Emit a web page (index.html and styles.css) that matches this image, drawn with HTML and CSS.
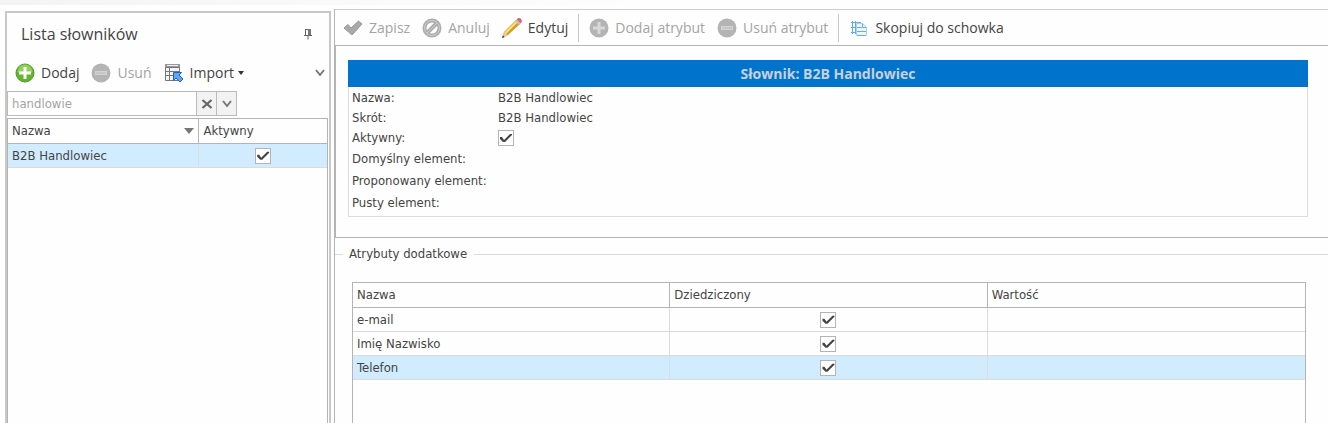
FILE: index.html
```html
<!DOCTYPE html>
<html lang="pl">
    <head>
        <title>Lista słowników</title>
        <meta charset="utf-8" />
        <meta name="viewport" content="width=device-width, initial-scale=1">
        <link rel="stylesheet" href="styles.css">
    </head>
    <body>
        <div class="strip"></div>
        <div class="app">
            <aside class="sidebar">
                <div class="sidebar-head">
                    <h1>Lista słowników</h1>
                    <button class="btn" type="button" aria-label="Przypnij">
                        <svg width="10" height="12" viewBox="0 0 10 12"><path d="M2.5 1v6M2 1.500h6M1 7.500h8M5 8v3.500" fill="none" stroke="#666"/><path d="M5 1h3v6H5z" fill="#777"/></svg>
                    </button>
                </div>
                <div class="tools">
                    <button class="btn" type="button">
                        <svg width="20" height="20" viewBox="0 0 20 20"><circle cx="10" cy="10" r="9" fill="#62b42c" stroke="#4f9a2a"/><path d="M2.500 9a7.500 7.500 0 0 1 15 0q-7 3-15 0z" fill="#8fd057"/><path d="M8.500 4h3v4.500H16v3h-4.500V16h-3v-4.500H4v-3h4.500z" fill="#fff"/></svg>
                        Dodaj
                    </button>
                    <button class="btn" type="button" disabled>
                        <svg width="20" height="20" viewBox="0 0 20 20"><circle cx="10" cy="10" r="9.500" fill="#b4b4b4"/><path d="M4 8h12v4H4z" fill="#d4d4d4"/><path d="M5 9.500h10v1H5z" fill="#bbb"/></svg>
                        Usuń
                    </button>
                    <button class="btn import" type="button">
                        <svg width="20" height="20" viewBox="0 0 20 20"><path d="M1.500 1.500h14v3h-14zM1.500 4.500h14v13h-14zM1.500 8.500h14M1.500 12.500h9M5.500 4.500v13" fill="#f3f3f3" stroke="#777"/><path d="M1 1h15v3H1z" fill="#999"/><path d="M3 2h11v1H3z" fill="#eee"/><path d="M9.500 9.500h8l-2.500 2.500 4 4-3 3-4-4-2.500 2.500z" fill="#62a5f5" stroke="#1d62c4"/></svg>
                        Import
                        <svg class="caret" width="6" height="4" viewBox="0 0 6 4"><path d="M0 0h6L3 4z" fill="#333"/></svg>
                    </button>
                    <button class="btn more" type="button" aria-label="Więcej">
                        <svg width="10" height="8" viewBox="0 0 10 8"><path d="M1 1l4 5 4-5" fill="none" stroke="#777" stroke-width="2"/></svg>
                    </button>
                </div>
                <div class="search">
                    <input type="text" value="handlowie" aria-label="Szukaj">
                    <button type="button" aria-label="Wyczyść">
                        <svg width="12" height="10" viewBox="0 0 12 10"><path d="M1.500 1l9 8M10.500 1l-9 8" stroke="#666" stroke-width="2.200"/></svg>
                    </button>
                    <button type="button" aria-label="Rozwiń">
                        <svg width="10" height="8" viewBox="0 0 10 8"><path d="M1 1l4 5 4-5" fill="none" stroke="#777" stroke-width="2"/></svg>
                    </button>
                </div>
                <div class="grid">
                    <table class="list">
                        <thead>
                            <tr>
                                <th class="name"><span class="sort">Nazwa <svg width="10" height="6" viewBox="0 0 10 6"><path d="M0 0h10L5 6z" fill="#777"/></svg></span></th>
                                <th>Aktywny</th>
                            </tr>
                        </thead>
                        <tbody>
                            <tr class="selected"><td>B2B Handlowiec</td><td class="center"><input class="check" type="checkbox" aria-label="Aktywny" checked></td></tr>
                        </tbody>
                    </table>
                </div>
            </aside>
            <main class="main">
                <div class="toolbar">
                    <button class="btn" type="button" disabled>
                        <svg width="20" height="20" viewBox="0 0 20 20"><path d="M1 10l4-3.500 3 3.500 7.500-7L19 6 9 17z" fill="#a9a9a9" stroke="#999"/></svg>
                        Zapisz
                    </button>
                    <button class="btn" type="button" disabled>
                        <svg width="20" height="20" viewBox="0 0 20 20"><circle cx="10" cy="10" r="7.500" fill="none" stroke="#adadad" stroke-width="4"/><path d="M5 15L15 5" stroke="#adadad" stroke-width="4"/><circle cx="10" cy="10" r="7.500" fill="none" stroke="#ccc"/><path d="M5 15L15 5" stroke="#ccc"/></svg>
                        Anuluj
                    </button>
                    <button class="btn" type="button">
                        <svg width="20" height="20" viewBox="0 0 20 20"><path d="M0 20l2-6L14 2l4 4L6 17z" fill="#d49a2a"/><path d="M2.500 14.500L14 3l1.500 1.500L4 16z" fill="#ffe37a"/><path d="M2 14l4 3.500L0 20z" fill="#e8c9a0"/><path d="M1 17.500L2.500 19 0 20z" fill="#222"/><path d="M13 3l1.500-1.500 4 4L17 7z" fill="#b9c0c4"/><path d="M14.500 1.500Q17-1 19 1t-.5 4.500z" fill="#dc6570"/></svg>
                        Edytuj
                    </button>
                    <span class="sep"></span>
                    <button class="btn" type="button" disabled>
                        <svg width="20" height="20" viewBox="0 0 20 20"><circle cx="10" cy="10" r="9.500" fill="#b4b4b4"/><path d="M8.500 4h3v4.500H16v3h-4.500V16h-3v-4.500H4v-3h4.500z" fill="#d8d8d8"/></svg>
                        Dodaj atrybut
                    </button>
                    <button class="btn" type="button" disabled>
                        <svg width="20" height="20" viewBox="0 0 20 20"><circle cx="10" cy="10" r="9.500" fill="#b4b4b4"/><path d="M4 8h12v4H4z" fill="#d4d4d4"/><path d="M5 9.500h10v1H5z" fill="#bbb"/></svg>
                        Usuń atrybut
                    </button>
                    <span class="sep"></span>
                    <button class="btn" type="button">
                        <svg width="20" height="20" viewBox="0 0 20 20"><path d="M2 4.500h10M2 9.500h5M2 14.500h5M3.500 3v13M6.500 3v13" fill="none" stroke="#62aef5"/><path d="M7.500 5.500h6l4 4v8h-10z" fill="#eff7ff" stroke="#a5d0fa"/><path d="M13.500 5.500v4h4M8 9.500h5M8 13.500h9M8 17.500h9" fill="none" stroke="#62aef5"/></svg>
                        Skopiuj do schowka
                    </button>
                </div>
                <section class="details">
                    <h2>Słownik: B2B Handlowiec</h2>
                    <div class="fields">
                        <div class="field"><span>Nazwa:</span><span>B2B Handlowiec</span></div>
                        <div class="field"><span>Skrót:</span><span>B2B Handlowiec</span></div>
                        <div class="field"><label for="active">Aktywny:</label><input class="check" id="active" type="checkbox" checked></div>
                        <div class="field tall"><span>Domyślny element:</span></div>
                        <div class="field tall"><span>Proponowany element:</span></div>
                        <div class="field tall"><span>Pusty element:</span></div>
                    </div>
                </section>
                <fieldset class="attributes">
                    <legend>Atrybuty dodatkowe</legend>
                    <div class="grid">
                        <table>
                            <thead>
                                <tr><th>Nazwa</th><th>Dziedziczony</th><th>Wartość</th></tr>
                            </thead>
                            <tbody>
                                <tr><td>e-mail</td><td class="center"><input class="check" type="checkbox" aria-label="Dziedziczony" checked></td><td></td></tr>
                                <tr><td>Imię Nazwisko</td><td class="center"><input class="check" type="checkbox" aria-label="Dziedziczony" checked></td><td></td></tr>
                                <tr class="selected"><td>Telefon</td><td class="center"><input class="check" type="checkbox" aria-label="Dziedziczony" checked></td><td></td></tr>
                            </tbody>
                        </table>
                    </div>
                </fieldset>
            </main>
        </div>
    </body>
</html>
```
FILE: styles.css
```css
* { box-sizing: border-box; }
body {
    display: flex;
    flex-direction: column;
    min-height: 100vh;
    margin: 0;
    background-color: #fefefe;
    color: #444;
    font-family: "DejaVu Sans Condensed", "Noto Sans", sans-serif;
    font-size: 13px;
    line-height: 16px;
}
h1, h2 { margin: 0; }
button, input { font: inherit; color: inherit; margin: 0; }
svg { flex: none; display: block; }

.strip {
    height: 5px;
    width: 50%;
    background: linear-gradient(to right, #f4f4f4, #fefefe);
}
.app {
    flex: 1;
    display: flex;
    gap: 3px;
    padding-left: 5px;
}

/* Left panel */
.sidebar {
    display: flex;
    flex-direction: column;
    width: 326px;
    margin-top: 6px;
    padding-right: 1px;
    border: 2px solid #c8c8c8;
    border-width: 2px 2px 0;
}
.sidebar-head {
    display: flex;
    align-items: center;
    justify-content: space-between;
    height: 42px;
    padding: 0 15px 0 14px;
}
.sidebar-head h1 {
    font: 16px/24px "Open Sans", sans-serif;
}
.btn {
    display: flex;
    align-items: center;
    gap: 6px;
    padding: 0;
    border: 0;
    background: none;
    font: 14px/20px "Open Sans", sans-serif;
    white-space: nowrap;
}
.btn:disabled { color: #a4a4a4; }
.tools {
    display: flex;
    align-items: center;
    gap: 12px;
    height: 36px;
    padding: 0 3px 0 8px;
}
.caret { margin-left: -2px; }
.more { margin-left: auto; }
.search {
    display: flex;
    width: 230px;
    height: 25px;
    border: 1px solid #bbb;
}
.search input {
    flex: 1;
    min-width: 0;
    padding: 0 4px;
    border: 0;
    background: none;
    color: #a4a4a4;
}
.search button {
    display: flex;
    align-items: center;
    justify-content: center;
    width: 20px;
    padding: 0;
    border: 0;
    border-left: 1px solid #bbb;
    background-color: #f2f2f2;
}

/* Tables */
.grid {
    flex: 1;
    border: 1px solid #b4b4b4;
    border-bottom: 0;
}
.sidebar .grid { margin-top: 2px; }
table {
    width: 100%;
    table-layout: fixed;
    border-collapse: separate;
    border-spacing: 0;
}
th, td {
    height: 24px;
    padding: 0 4px;
    border-right: 1px solid #dcdcdc;
    border-bottom: 1px solid #dcdcdc;
    font-weight: normal;
    text-align: left;
}
th {
    height: 25px;
    border-color: #b4b4b4;
}
th:last-child, td:last-child { border-right: 0; }
.name { width: 60%; }
.sort {
    display: flex;
    align-items: center;
    justify-content: space-between;
}
.selected { background-color: #d2ecff; }
.center { text-align: center; }
.check {
    appearance: none;
    display: inline-block;
    width: 16px;
    height: 16px;
    border: 1px solid #b4b4b4;
    background-color: #fff;
    vertical-align: middle;
}
.check:checked::before {
    content: "";
    display: block;
    height: 14px;
    background-color: #444;
    clip-path: polygon(1px 6px, 3px 6px, 5px 9px, 11px 3px, 13px 3px, 13px 4px, 6px 11px, 4px 11px, 1px 8px);
}

/* Right side */
.main {
    flex: 1;
    display: flex;
    flex-direction: column;
    min-width: 0;
    margin-top: 4px;
    border-left: 1px solid #b4b4b4;
}
.toolbar {
    display: flex;
    align-items: center;
    gap: 12px;
    height: 37px;
    padding-left: 8px;
    border-top: 1px solid #ccc;
    border-bottom: 1px solid #b4b4b4;
}
.sep {
    width: 1px;
    height: 28px;
    margin: 0 -2px;
    background-color: #c8c8c8;
}
.details {
    padding: 14px 20px 20px 12px;
    border-left: 1px solid #b4b4b4;
    border-bottom: 1px solid #b4b4b4;
}
.details h2 {
    background-color: #0074cd;
    color: #c8d0d8;
    font: bold 14px/27px "Open Sans", sans-serif;
    text-align: center;
}
.fields {
    padding: 1px 3px 2px;
    border: 1px solid #dcdcdc;
    border-top: 0;
}
.field {
    display: grid;
    grid-template-columns: 146px 1fr;
    align-items: center;
    height: 20px;
}
.tall { height: 22px; }
.attributes {
    flex: 1;
    display: flex;
    flex-direction: column;
    min-width: 0;
    margin: 8px 0 0;
    padding: 20px 22px 0 17px;
    border: 0;
    border-top: 1px solid #dcdcdc;
}
.attributes legend {
    margin-left: -9px;
    padding: 0 7px 0 6px;
}
```
